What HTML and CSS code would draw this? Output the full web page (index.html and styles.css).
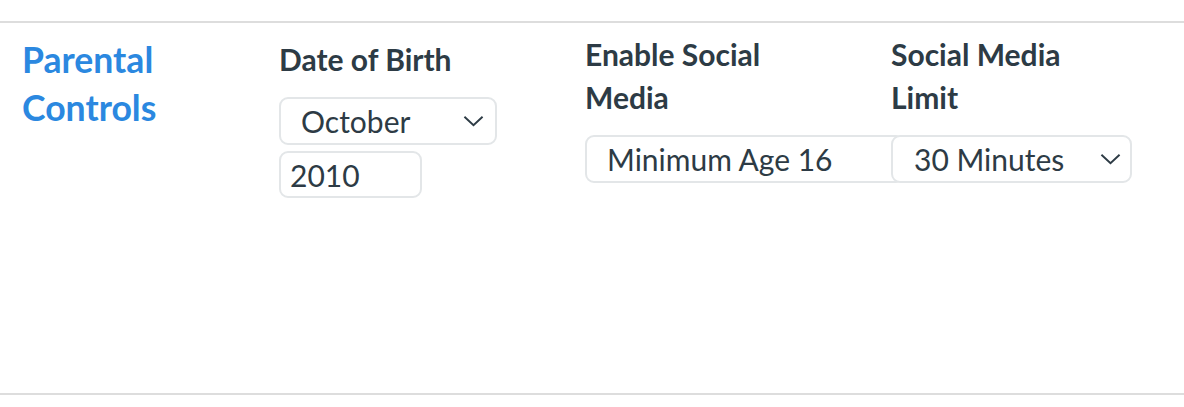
FILE: index.html
```html
<!DOCTYPE html>
<html lang="en">
<head>
<meta charset="utf-8">
<title>Parental Controls</title>
<link rel="stylesheet" href="styles.css">
</head>
<body>
<section class="panel">
  <h2 class="title">Parental<br>Controls</h2>
  <div class="field dob">
    <div class="label">Date of Birth</div>
    <div class="select month"><span>October</span>
      <svg class="chev" viewBox="0 0 22 12" width="21" height="12"><path d="M1.5 1.5 L11 10.5 L20.5 1.5" fill="none" stroke="#2d3b45" stroke-width="2"/></svg>
    </div>
    <div class="input year"><span>2010</span></div>
  </div>
  <div class="field social">
    <div class="label">Enable Social<br>Media</div>
    <div class="input age"><span>Minimum Age 16</span></div>
  </div>
  <div class="field limit">
    <div class="label">Social Media<br>Limit</div>
    <div class="select minutes"><span>30 Minutes</span>
      <svg class="chev" viewBox="0 0 22 12" width="21" height="12"><path d="M1.5 1.5 L11 10.5 L20.5 1.5" fill="none" stroke="#2d3b45" stroke-width="2"/></svg>
    </div>
  </div>
</section>
</body>
</html>
```

FILE: styles.css
```css
html, body {
  margin: 0;
  padding: 0;
  background: #ffffff;
}
body {
  font-family: Lato, "Noto Sans", sans-serif;
  color: #2d3b45;
}
.panel {
  margin-top: 21px;
  height: 374px;
  border-top: 2px solid #dddddd;
  border-bottom: 2px solid #dddddd;
  display: grid;
  grid-template-columns: 257px 306px 306px 1fr;
  align-items: start;
  padding-left: 22px;
  box-sizing: border-box;
}
.title {
  margin: 0;
  padding-top: 13px;
  font-size: 35.6px;
  font-weight: 700;
  line-height: 48px;
  color: #2b88e0;
}
.label {
  font-size: 30px;
  font-weight: 700;
  line-height: 43px;
}
.dob .label {
  padding-top: 15px;
}
.social .label, .limit .label {
  padding-top: 10px;
}
.select, .input {
  box-sizing: border-box;
  height: 48px;
  border: 2px solid #e3e6e8;
  border-radius: 9px;
  display: flex;
  align-items: center;
  font-size: 30px;
  background: #fff;
}
.month {
  margin-top: 16px;
  width: 218px;
  padding: 0 11px 0 20px;
  justify-content: space-between;
}
.year {
  margin-top: 6px;
  width: 143px;
  height: 47px;
  padding-left: 9px;
}
.age {
  margin-top: 16px;
  width: 320px;
  padding-left: 20px;
}
.minutes {
  position: relative;
  z-index: 1;
  margin-top: 16px;
  width: 241px;
  padding: 0 9px 0 21px;
  justify-content: space-between;
}
.chev {
  display: block;
}
```
